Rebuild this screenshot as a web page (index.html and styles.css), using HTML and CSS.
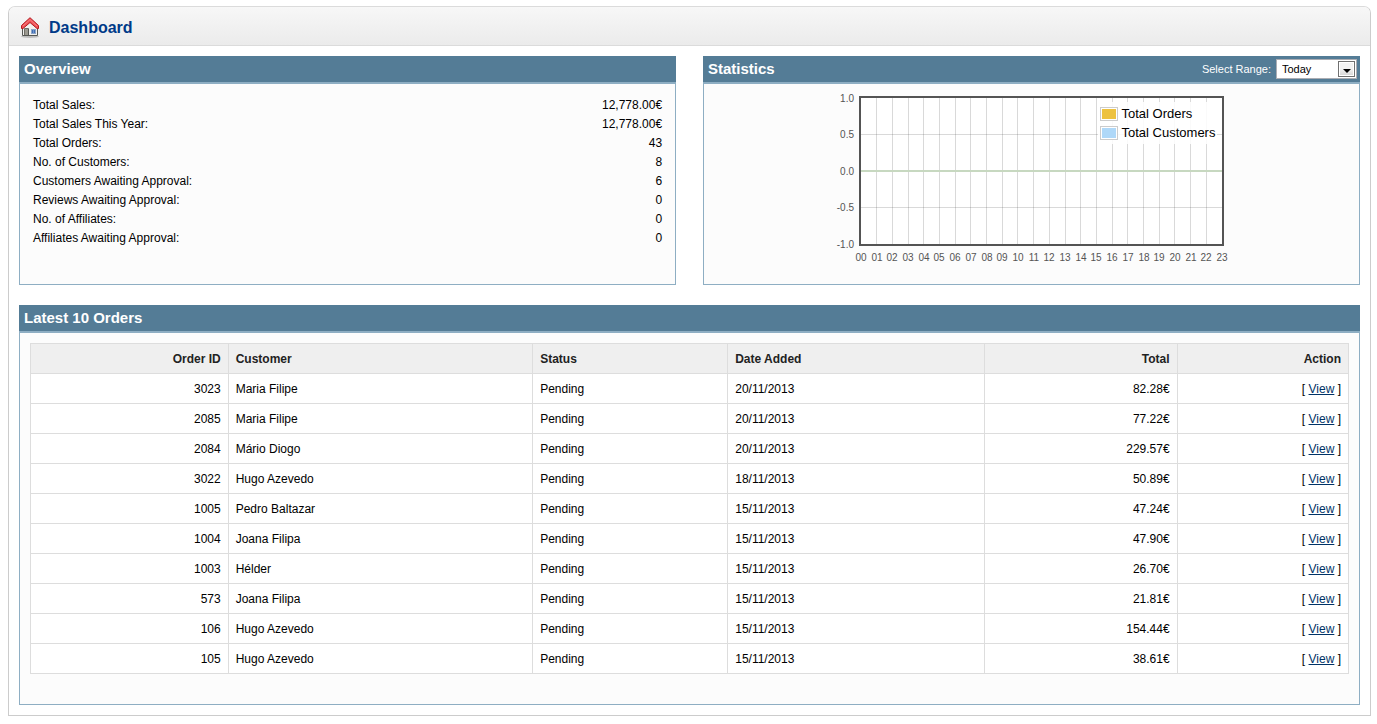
FILE: index.html
```html
<!DOCTYPE html>
<html lang="en">
<head>
<meta charset="utf-8">
<title>Dashboard</title>
<link rel="stylesheet" href="styles.css">
</head>
<body>
<main class="box">
  <header class="heading">
    <svg class="home" width="22" height="22" viewBox="0 0 22 22" aria-hidden="true">
      <ellipse cx="11" cy="19.500" rx="9" ry="1.500" fill="#bdbdbd"/>
      <path d="M3.500 18.500V10L11 3L18.500 10V18.500Z" fill="#f1f1ef" stroke="#555753"/>
      <path d="M5.500 18V11.500H9.500V18" fill="#9b9990" stroke="#6f6d66"/>
      <path d="M9.500 12V18" stroke="#555753"/>
      <rect x="12.500" y="12.500" width="4" height="4" fill="#3f6fb5" stroke="#8fa5c6"/>
      <path d="M14.500 12.500V16.500" stroke="#7396cc"/>
      <path d="M11 0.700L2.500 8.500V11.500H4L11 5.500L18 11.500H19.500V8.500Z" fill="#f05156" stroke="#b31b20"/>
      <path d="M4 9L11 2.600L18 9" fill="none" stroke="#f98185"/>
    </svg>
    <h1>Dashboard</h1>
  </header>
  <div class="content">
    <div class="top">
      <section class="panel">
        <div class="bar"><h2>Overview</h2></div>
        <div class="body">
          <table class="summary">
            <tr><td>Total Sales:</td><td>12,778.00€</td></tr>
            <tr><td>Total Sales This Year:</td><td>12,778.00€</td></tr>
            <tr><td>Total Orders:</td><td>43</td></tr>
            <tr><td>No. of Customers:</td><td>8</td></tr>
            <tr><td>Customers Awaiting Approval:</td><td>6</td></tr>
            <tr><td>Reviews Awaiting Approval:</td><td>0</td></tr>
            <tr><td>No. of Affiliates:</td><td>0</td></tr>
            <tr><td>Affiliates Awaiting Approval:</td><td>0</td></tr>
          </table>
        </div>
      </section>
      <section class="panel">
        <div class="bar">
          <h2>Statistics</h2>
          <div class="range">
            <label for="range">Select Range:</label>
            <span class="picker">
              <select id="range"><option>Today</option><option>This Week</option><option>This Month</option><option>This Year</option></select>
              <span class="arrow" aria-hidden="true"><svg width="8" height="4" viewBox="0 0 8 4"><path d="M0 0H8L4 4Z"/></svg></span>
            </span>
          </div>
        </div>
        <div class="body">
          <div class="chart">
            <svg width="390" height="170" viewBox="0 0 390 170" role="img" aria-label="Orders and customers per hour">
              <rect x="24" y="3" width="363" height="148" fill="#fff"/>
              <path class="grid" d="M40.500 3V151M56.500 3V151M72.500 3V151M87.500 3V151M103.500 3V151M119.500 3V151M134.500 3V151M150.500 3V151M166.500 3V151M181.500 3V151M197.500 3V151M213.500 3V151M229.500 3V151M244.500 3V151M260.500 3V151M276.500 3V151M291.500 3V151M307.500 3V151M323.500 3V151M338.500 3V151M354.500 3V151M370.500 3V151M24 40.500H387M24 113.500H387"/>
              <path d="M24 77H387" stroke="#c7d8c0" stroke-width="2"/>
              <rect x="24" y="3" width="363" height="148" fill="none" stroke="#545454" stroke-width="2"/>
              <g class="tick y"><text x="18" y="8">1.0</text><text x="18" y="44">0.5</text><text x="18" y="81">0.0</text><text x="18" y="117">-0.5</text><text x="18" y="154">-1.0</text></g>
              <g class="tick x"><text x="25" y="167">00</text><text x="41" y="167">01</text><text x="56" y="167">02</text><text x="72" y="167">03</text><text x="88" y="167">04</text><text x="103" y="167">05</text><text x="119" y="167">06</text><text x="135" y="167">07</text><text x="151" y="167">08</text><text x="166" y="167">09</text><text x="182" y="167">10</text><text x="198" y="167">11</text><text x="213" y="167">12</text><text x="229" y="167">13</text><text x="245" y="167">14</text><text x="260" y="167">15</text><text x="276" y="167">16</text><text x="292" y="167">17</text><text x="308" y="167">18</text><text x="323" y="167">19</text><text x="339" y="167">20</text><text x="355" y="167">21</text><text x="370" y="167">22</text><text x="386" y="167">23</text></g>
            </svg>
            <ul class="legend">
              <li><i class="swatch orders"></i>Total Orders</li>
              <li><i class="swatch customers"></i>Total Customers</li>
            </ul>
          </div>
        </div>
      </section>
    </div>
    <section class="panel latest">
      <div class="bar"><h2>Latest 10 Orders</h2></div>
      <div class="body">
        <table class="list">
          <colgroup><col class="c-id"><col class="c-customer"><col class="c-status"><col class="c-date"><col class="c-total"><col class="c-action"></colgroup>
          <thead>
            <tr><th class="right">Order ID</th><th>Customer</th><th>Status</th><th>Date Added</th><th class="right">Total</th><th class="right">Action</th></tr>
          </thead>
          <tbody>
            <tr><td class="right">3023</td><td>Maria Filipe</td><td>Pending</td><td>20/11/2013</td><td class="right">82.28€</td><td class="right">[ <a href="#">View</a> ]</td></tr>
            <tr><td class="right">2085</td><td>Maria Filipe</td><td>Pending</td><td>20/11/2013</td><td class="right">77.22€</td><td class="right">[ <a href="#">View</a> ]</td></tr>
            <tr><td class="right">2084</td><td>Mário Diogo</td><td>Pending</td><td>20/11/2013</td><td class="right">229.57€</td><td class="right">[ <a href="#">View</a> ]</td></tr>
            <tr><td class="right">3022</td><td>Hugo Azevedo</td><td>Pending</td><td>18/11/2013</td><td class="right">50.89€</td><td class="right">[ <a href="#">View</a> ]</td></tr>
            <tr><td class="right">1005</td><td>Pedro Baltazar</td><td>Pending</td><td>15/11/2013</td><td class="right">47.24€</td><td class="right">[ <a href="#">View</a> ]</td></tr>
            <tr><td class="right">1004</td><td>Joana Filipa</td><td>Pending</td><td>15/11/2013</td><td class="right">47.90€</td><td class="right">[ <a href="#">View</a> ]</td></tr>
            <tr><td class="right">1003</td><td>Hélder</td><td>Pending</td><td>15/11/2013</td><td class="right">26.70€</td><td class="right">[ <a href="#">View</a> ]</td></tr>
            <tr><td class="right">573</td><td>Joana Filipa</td><td>Pending</td><td>15/11/2013</td><td class="right">21.81€</td><td class="right">[ <a href="#">View</a> ]</td></tr>
            <tr><td class="right">106</td><td>Hugo Azevedo</td><td>Pending</td><td>15/11/2013</td><td class="right">154.44€</td><td class="right">[ <a href="#">View</a> ]</td></tr>
            <tr><td class="right">105</td><td>Hugo Azevedo</td><td>Pending</td><td>15/11/2013</td><td class="right">38.61€</td><td class="right">[ <a href="#">View</a> ]</td></tr>
          </tbody>
        </table>
      </div>
    </section>
  </div>
</main>
</body>
</html>
```
FILE: styles.css
```css
* { box-sizing: border-box; }
body {
  margin: 6px 6px 8px 8px;
  background: #fff;
  color: #000;
  font: 12px/15px "Liberation Sans", Arial, sans-serif;
}
h1, h2 { margin: 0; }
.box {
  border: 1px solid #ccc;
  border-top-color: #dbdbdb;
  border-radius: 7px 7px 0 0;
}
.heading {
  display: flex;
  align-items: center;
  gap: 8px;
  height: 39px;
  padding: 4px 10px 0;
  border-bottom: 1px solid #dbdbdb;
  border-radius: 6px 6px 0 0;
  background: linear-gradient(#f7f7f7, #ebebeb);
}
.heading h1 { color: #003a88; font-size: 16px; line-height: 20px; }
.home { display: block; }
.content { padding: 10px; }
.top {
  display: flex;
  justify-content: space-between;
  margin-bottom: 20px;
}
.top .panel { display: flex; flex-direction: column; width: 49%; }
.bar {
  display: flex;
  align-items: center;
  justify-content: space-between;
  height: 28px;
  padding: 0 3px 0 5px;
  border-bottom: 2px solid #8eaec3;
  background: #547c96;
  color: #fff;
}
.bar h2 { font-size: 15px; line-height: 18px; }
.body {
  flex: 1;
  min-height: 201px;
  padding: 10px;
  border: 1px solid #8eaec3;
  border-top: 0;
  background: #fcfcfc;
}
.summary { width: 100%; border-spacing: 2px; }
.summary td { padding: 2px 1px 0; }
.summary td:last-child { text-align: right; }

.range { display: flex; align-items: center; gap: 5px; font-size: 11px; }
.picker { position: relative; display: block; }
.picker select {
  display: block;
  width: 81px;
  height: 20px;
  padding: 0 20px 0 5px;
  border: 1px solid #abadb3;
  border-radius: 0;
  appearance: none;
  background: #fff;
  color: #000;
  font: 11px "Liberation Sans", Arial, sans-serif;
}
.arrow {
  position: absolute;
  top: 2px;
  right: 2px;
  display: flex;
  align-items: center;
  justify-content: center;
  width: 17px;
  height: 16px;
  padding-top: 3px;
  border: 1px solid #707070;
  background: linear-gradient(#f2f2f2 50%, #d4d4d4);
  box-shadow: inset 0 0 0 1px #fff;
  pointer-events: none;
}

.chart { position: relative; width: 390px; margin: 0 auto; }
.chart svg { display: block; overflow: visible; }
.grid { fill: none; stroke: #545454; stroke-opacity: 0.22; }
.tick { fill: #545454; font-size: 10px; }
.x { text-anchor: middle; }
.y { text-anchor: end; }
.legend {
  position: absolute;
  top: 8px;
  right: 9px;
  margin: 0;
  padding: 2px;
  background: rgba(255, 255, 255, 0.85);
  list-style: none;
  font-size: 13px;
}
.legend li { display: flex; align-items: center; gap: 4px; height: 19px; }
.swatch { width: 18px; height: 14px; border: 1px solid #ccc; box-shadow: inset 0 0 0 1px #fff; }
.orders { background: #edc240; }
.customers { background: #afd8f8; }

.latest .body { padding-bottom: 30px; }
.list {
  width: 100%;
  border-collapse: collapse;
  table-layout: fixed;
  background: #fff;
}
.list th, .list td {
  height: 30px;
  padding: 2px 7px 0;
  border: 1px solid #ddd;
  text-align: left;
}
.list th { background: #efefef; color: #222; }
.list .right { text-align: right; }
.list a { color: #003366; }
.c-id { width: 15%; }
.c-customer { width: 23.1%; }
.c-status { width: 14.8%; }
.c-date { width: 19.5%; }
.c-total { width: 14.6%; }
.c-action { width: 13%; }
```
